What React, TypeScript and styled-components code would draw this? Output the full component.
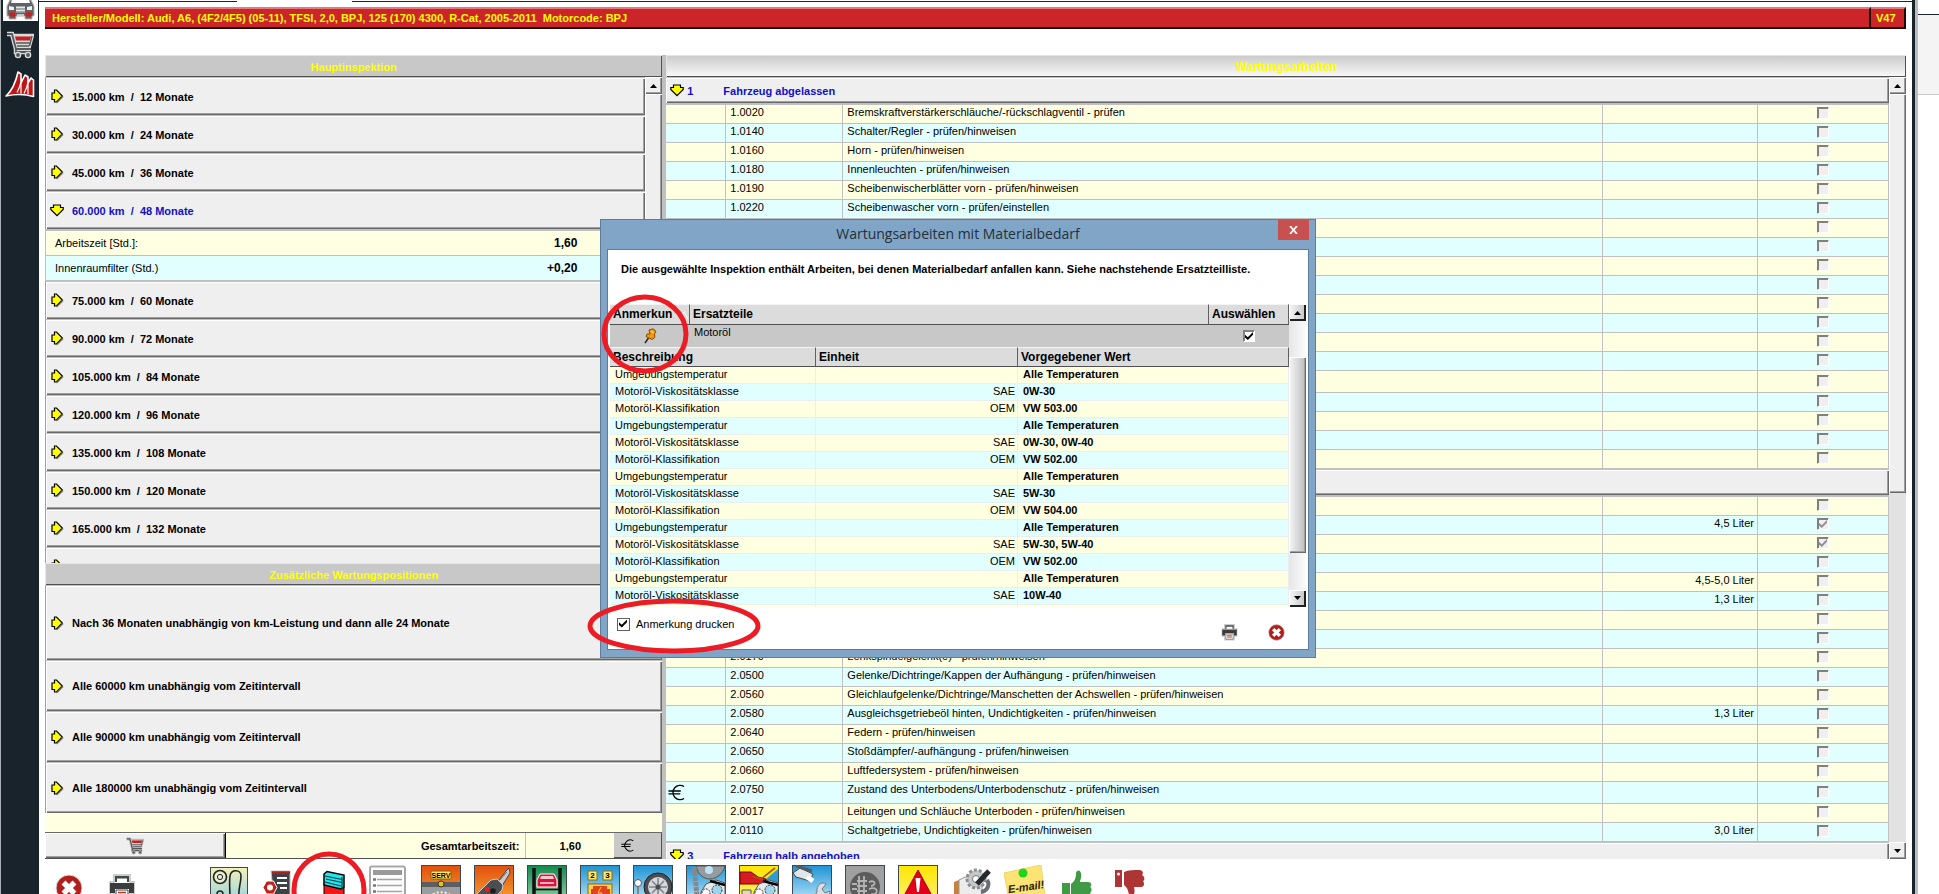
import React from "react";
import styled, { createGlobalStyle, css } from "styled-components";

const CREAM = "#ffffe1";
const AQUA = "#e1ffff";
const FACE = "#efefef";
const EDGE = "#c0c0c0";
const DARK = "#696969";

const GlobalStyle = createGlobalStyle`
  *, *::before, *::after { box-sizing: border-box; }
  body {
    margin: 0;
    background: #fff;
    color: #000;
    font: 11px/14px "Liberation Sans", Arial, sans-serif;
    overflow: hidden;
  }
  button { font: inherit; color: inherit; border: 0; padding: 0; background: none; border-radius: 0; }
  table { border-collapse: separate; border-spacing: 0; table-layout: fixed; width: 100%; }
  td, th { padding: 0; text-align: left; }
`;

const raised = css`
  background: ${FACE};
  box-shadow: inset 1px 1px #fff, inset -1px -1px ${DARK}, inset -2px -2px #a0a0a0;
`;

/* ---------- page frame ---------- */

const Page = styled.div`
  display: flex;
  height: 100vh;
  overflow: hidden;
`;

const Sidebar = styled.nav`
  flex: none;
  width: 39px;
  display: flex;
  flex-direction: column;
  align-items: center;
  background: #18232b;
  border-left: 1px solid #a9b0b4;
`;

const SideButton = styled.button<{ $active?: boolean; $height: number }>`
  width: 35px;
  height: ${(p) => p.$height}px;
  display: flex;
  align-items: center;
  justify-content: center;
  background: ${(p) => (p.$active ? "#fff" : "transparent")};
`;

const Workspace = styled.main`
  flex: 1;
  min-width: 0;
  display: flex;
  flex-direction: column;
  border-right: 3px solid #18232b;
`;

const TabEdge = styled.div`
  flex: none;
  display: flex;
  justify-content: space-between;
  height: 2px;
  margin-bottom: 5px;
`;

const TabLine = styled.div<{ $grow?: boolean }>`
  width: ${(p) => (p.$grow ? "auto" : "198px")};
  flex: ${(p) => (p.$grow ? 1 : "none")};
  margin-left: ${(p) => (p.$grow ? 115 : 0)}px;
  border-bottom: 1px solid #18232b;
`;

const Body = styled.div`
  flex: 1;
  min-height: 0;
  display: flex;
  flex-direction: column;
  padding: 0 6px;
`;

const VehicleBar = styled.header`
  flex: none;
  display: flex;
  height: 22px;
  margin-bottom: 26px;
  color: #ffff00;
  font-weight: bold;
  line-height: 19px;
`;

const BarCell = styled.div<{ $grow?: boolean }>`
  flex: ${(p) => (p.$grow ? 1 : "none")};
  width: ${(p) => (p.$grow ? "auto" : "35px")};
  padding-left: ${(p) => (p.$grow ? 7 : 5)}px;
  white-space: pre;
  overflow: hidden;
  background: #cc2529;
  border-top: 2px solid #e8787a;
  border-right: 2px solid #200505;
  border-bottom: 2px solid #200505;
`;

const Columns = styled.div`
  flex: 1;
  min-height: 0;
  display: grid;
  grid-template-columns: minmax(0, 617fr) minmax(0, 1239fr);
  grid-template-rows: minmax(0, 1fr);
  column-gap: 4px;
  background: ${EDGE};
`;

const Panel = styled.section`
  display: flex;
  flex-direction: column;
  min-height: 0;
  background: #fff;
`;

const PanelTitle = styled.h2<{ $large?: boolean; $gradient?: boolean }>`
  flex: none;
  height: 22px;
  margin: 0;
  padding-top: 1px;
  text-align: center;
  font-size: ${(p) => (p.$large ? 12 : 11)}px;
  line-height: 22px;
  color: #ffff00;
  background: ${(p) => (p.$gradient ? "linear-gradient(#c9c9c9, #fafafa)" : "#c8c8c8")};
  box-shadow: inset 1px 1px #e4e4e4, inset -1px -1px #505050;
`;

const ListArea = styled.div`
  flex: 1;
  min-height: 0;
  display: flex;
`;

const ListBody = styled.div`
  flex: 1;
  min-width: 0;
  overflow: hidden;
`;

/* ---------- scroll bars ---------- */

const ScrollTrack = styled.div<{ $modal?: boolean }>`
  flex: none;
  width: 17px;
  display: flex;
  flex-direction: column;
  background: ${(p) => (p.$modal ? "linear-gradient(90deg, #e6e6e6, #fbfbfb)" : "#e2e2e2")};
`;

const ScrollButton = styled.button<{ $modal?: boolean }>`
  flex: none;
  height: 17px;
  display: flex;
  align-items: center;
  justify-content: center;
  ${raised}
  ${(p) =>
    p.$modal &&
    css`
      background: linear-gradient(90deg, #f8f8f8, #c4c4c4);
      box-shadow: inset 1px 1px #fff, inset -2px -2px #202020;
    `}
`;

const ScrollThumb = styled.div<{ $share: number; $modal?: boolean }>`
  flex: ${(p) => p.$share} 1 0;
  ${raised}
  ${(p) =>
    p.$modal &&
    css`
      background: linear-gradient(90deg, #f6f6f6, #bcbcbc);
    `}
`;

const ScrollGap = styled.div<{ $share: number }>`
  flex: ${(p) => p.$share} 1 0;
`;

function ScrollBar(props: { before?: number; thumb: number; after: number; modal?: boolean }) {
  const { before = 0, thumb, after, modal } = props;
  return (
    <ScrollTrack $modal={modal}>
      <ScrollButton $modal={modal} aria-label="Nach oben">
        <svg width="7" height="4"><path d="M0 4L3.5 0L7 4Z" /></svg>
      </ScrollButton>
      {before > 0 && <ScrollGap $share={before} />}
      <ScrollThumb $share={thumb} $modal={modal} />
      <ScrollGap $share={after} />
      <ScrollButton $modal={modal} aria-label="Nach unten">
        <svg width="7" height="4"><path d="M0 0L3.5 4L7 0Z" /></svg>
      </ScrollButton>
    </ScrollTrack>
  );
}

/* ---------- inspection lists ---------- */

const IntervalButton = styled.button<{ $open?: boolean; $height: number }>`
  width: 100%;
  height: ${(p) => p.$height}px;
  display: flex;
  align-items: center;
  gap: 8px;
  padding-left: 4px;
  border-top: 1px solid ${EDGE};
  border-left: 1px solid #a0a0a0;
  font-weight: bold;
  white-space: pre;
  color: ${(p) => (p.$open ? "#1010c8" : "#000")};
  ${raised}
`;

const ArrowSlot = styled.span`
  width: 14px;
  display: flex;
  justify-content: center;
`;

const TimeRows = styled.dl`
  margin: 0;
  border-top: 2px solid ${EDGE};
  border-left: 1px solid ${EDGE};
`;

const TimeRow = styled.div<{ $tint: string }>`
  height: 25px;
  display: flex;
  justify-content: space-between;
  align-items: center;
  padding: 0 68px 0 9px;
  background: ${(p) => p.$tint};
  border-bottom: 1px solid ${EDGE};
`;

const TimeValue = styled.dd`
  margin: 0;
  font-size: 12px;
  font-weight: bold;
`;

const Spacer = styled.div`
  flex: none;
  height: 20px;
  background: ${CREAM};
  border-bottom: 1px solid ${DARK};
`;

const TotalRow = styled.div`
  flex: none;
  display: flex;
  height: 26px;
  background: ${CREAM};
  font-weight: bold;
  line-height: 26px;
  border-bottom: 1px solid #505050;
`;

const CartButton = styled.button`
  width: 181px;
  display: flex;
  align-items: center;
  justify-content: center;
  border-right: 1px solid #000;
  ${raised}
`;

const TotalLabel = styled.div`
  flex: 1;
  text-align: right;
  padding-right: 6px;
  border-right: 1px solid ${EDGE};
`;

const TotalValue = styled.div`
  width: 88px;
  text-align: center;
`;

const EuroButton = styled.button`
  width: 48px;
  padding-left: 7px;
  display: flex;
  align-items: center;
  background: #c8c8c8;
  box-shadow: inset -1px -1px #505050;
`;

/* ---------- work table ---------- */

const WorkRow = styled.tr<{ $tint: string; $tall?: boolean }>`
  height: ${(p) => (p.$tall ? 22 : 19)}px;
  background: ${(p) => p.$tint};
`;

const WorkCell = styled.td<{ $align?: "right" | "center" }>`
  height: inherit;
  padding: 0 3px 0 ${(p) => (p.$align ? 3 : 4)}px;
  line-height: 14px;
  vertical-align: top;
  white-space: nowrap;
  text-align: ${(p) => p.$align ?? "left"};
  border-right: 1px solid ${EDGE};
  border-bottom: 1px solid ${EDGE};
`;

const MarkCell = styled(WorkCell)`
  padding: 0 3px 0 2px;
  line-height: 0;
  vertical-align: middle;
`;

const TickCell = styled(WorkCell)`
  padding: 0 0 2px;
  line-height: 0;
  vertical-align: middle;
`;

const SectionButton = styled.button`
  width: 100%;
  height: 28px;
  display: flex;
  align-items: center;
  padding-left: 4px;
  font-weight: bold;
  color: #1010c8;
  border-top: 1px solid ${EDGE};
  border-bottom: 2px solid ${EDGE};
  ${raised}
`;

const SectionNumber = styled.span`
  width: 36px;
  margin-left: 3px;
  text-align: left;
`;

const Tick = styled.input<{ $tone: "grey" | "black" }>`
  appearance: none;
  flex: none;
  width: 12px;
  height: 12px;
  margin: 0;
  background: ${(p) => (p.$tone === "grey" ? "#efefef" : "#fff")};
  border: 1px solid;
  border-color: #808080 #fff #fff #808080;
  box-shadow: inset 1px 1px #808080;
  &:checked::after {
    content: "";
    display: block;
    width: 8px;
    height: 8px;
    margin: 1px;
    background: ${(p) => (p.$tone === "grey" ? "#909090" : "#000")};
    clip-path: polygon(0 35%, 35% 65%, 100% 0, 100% 35%, 35% 100%, 0 70%);
  }
`;

/* ---------- dialog ---------- */

const Dialog = styled.div`
  position: fixed;
  left: 600px;
  top: 219px;
  width: 716px;
  padding: 0 6px 7px;
  background: #81a5c6;
  border: 1px solid #5d7c9a;
`;

const DialogHead = styled.div`
  display: flex;
  height: 29px;
`;

const DialogTitle = styled.h1`
  flex: 1;
  margin: 0;
  padding-left: 31px;
  text-align: center;
  font: 14px/28px "Open Sans", "Noto Sans", sans-serif;
  color: #23303c;
`;

const DialogClose = styled.button`
  width: 31px;
  height: 20px;
  display: flex;
  align-items: center;
  justify-content: center;
  background: #c75050;
`;

const DialogBody = styled.div`
  background: #fff;
  border: 1px solid #5d7c9a;
  padding: 12px 2px 0;
  height: 401px;
`;

const Message = styled.p`
  margin: 0 0 28px;
  padding-left: 11px;
  font-weight: bold;
  white-space: nowrap;
`;

const PartsArea = styled.div`
  display: flex;
  height: 303px;
  overflow: hidden;
`;

const PartsTables = styled.div`
  flex: 1;
  min-width: 0;
  overflow: hidden;
`;

const HeadCell = styled.th<{ $short?: boolean }>`
  height: ${(p) => (p.$short ? 20 : 21)}px;
  padding: 0 0 0 3px;
  font-size: 12px;
  line-height: ${(p) => (p.$short ? 18 : 19)}px;
  white-space: nowrap;
  background: #dcdcdc;
  border-top: 1px solid #f4f4f4;
  border-right: 1px solid #606060;
  border-bottom: 1px solid #505050;
`;

const SortMark = styled.span`
  margin-left: 8px;
  font-weight: normal;
  font-size: 11px;
  color: #fff;
`;

const PartCell = styled.td<{ $center?: boolean }>`
  height: 22px;
  padding-left: ${(p) => (p.$center ? 0 : 4)}px;
  background: #c8c8c8;
  vertical-align: ${(p) => (p.$center ? "middle" : "top")};
  text-align: ${(p) => (p.$center ? "center" : "left")};
  line-height: ${(p) => (p.$center ? 0 : "14px")};
`;

const SpecCell = styled.td<{ $tint: string; $right?: boolean; $bold?: boolean }>`
  height: 17px;
  padding: 0 2px 2px 5px;
  line-height: 14px;
  white-space: nowrap;
  background: ${(p) => p.$tint};
  text-align: ${(p) => (p.$right ? "right" : "left")};
  font-weight: ${(p) => (p.$bold ? "bold" : "normal")};
  border-right: 1px solid #e9eef0;
  border-bottom: 1px solid #e9eef0;
`;

const DialogFoot = styled.div`
  display: flex;
  align-items: flex-start;
  padding: 10px 21px 0 7px;
`;

const PrintOption = styled.label`
  flex: 1;
  display: flex;
  align-items: center;
  gap: 6px;
`;

const PrintTick = styled(Tick)`
  width: 13px;
  height: 13px;
  border-color: #606060;
  box-shadow: none;
`;

const FootButton = styled.button`
  width: 17px;
  height: 17px;
  margin: 7px 0 0 30px;
  line-height: 0;
`;

/* red pen circles drawn on top of the screen */
const PenRing = styled.svg<{ $x: number; $y: number }>`
  position: absolute;
  left: ${(p) => p.$x}px;
  top: ${(p) => p.$y}px;
  pointer-events: none;
  fill: none;
  stroke: #ed1c24;
  stroke-width: 5px;
`;

/* ---------- tool bar ---------- */

const ToolBar = styled.div`
  flex: none;
  display: flex;
  align-items: flex-start;
  height: 35px;
  padding: 6px 0 0 4px;
`;

const Tool = styled.button`
  position: relative;
  flex: none;
  width: 40px;
  height: 40px;
  margin-right: 13px;
  line-height: 0;
`;

const ToolPad = styled.span`
  display: flex;
  justify-content: center;
  padding-top: 6px;
`;

const ToolGap = styled.span<{ $width: number }>`
  flex: none;
  width: ${(p) => p.$width}px;
`;

const RightStrip = styled.aside`
  flex: none;
  width: 24px;
  border-left: 3px solid #bdbdbd;
  background: #fff;
`;

const StripBox = styled.div`
  height: 81px;
  margin-top: 14px;
  background: #f4f4f4;
  border-top: 1px solid #18232b;
  border-bottom: 1px solid #c8c8c8;
`;

/* ---------- drawings ---------- */

const ArrowRight = () => (
  <svg width="13" height="15" viewBox="0 0 13 15">
    <path d="M6 14.2L12.4 7.8" stroke="#777" />
    <path d="M3.5 4V1H5.5L11.3 7L5.5 13H3.5V10.500H1V4Z" fill="#ffff00" stroke="#000" strokeWidth="1.200" />
  </svg>
);

const ArrowDown = () => (
  <svg width="14" height="13" viewBox="0 0 14 13">
    <path d="M3.500 1H10.500V3.500H13.200V5.500L7 11.700L.8 5.500V3.500H3.500Z" fill="#ffff00" stroke="#000" strokeWidth="1.200" />
  </svg>
);

const Euro = ({ size }: { size: number }) => (
  <svg width={size} height={size} viewBox="0 0 18 18" fill="none" stroke="#000" strokeWidth="1.4">
    <path d="M17 2.6A7.6 7.6 0 1 0 17 15.4M.5 7.4H13.5M.5 10.4H13" />
  </svg>
);

const Cart = ({ size, rim }: { size: number; rim: string }) => (
  <svg width={size} height={size} viewBox="0 0 28 26" fill="none">
    <path d="M1 2H6L10 17H25M10 17V20H25" stroke={rim} strokeWidth="4.500" />
    <path d="M7 3H27L24 14H10Z" fill="#d8d8d8" stroke={rim} strokeWidth="2.500" />
    <path d="M1 2H6L10 17H25M10 17V20H25" stroke="#56585a" strokeWidth="1.800" />
    <path d="M9 4.500H25L24 8.500H10Z" fill="#c81e1e" />
    <path d="M10 11H23.500M11 14H23M26 4L23.500 14" stroke="#56585a" strokeWidth="1.400" />
    <circle cx="12" cy="23" r="2.600" fill="#56585a" stroke={rim} strokeWidth="1.400" />
    <circle cx="22" cy="23" r="2.600" fill="#56585a" stroke={rim} strokeWidth="1.400" />
  </svg>
);

const Car = () => (
  <svg width="31" height="21" viewBox="0 0 31 21">
    <path d="M5 0H26L29 6V16H27V19H20V16H11V19H4V16H2V6Z" fill="#606365" stroke="#b4b4b4" />
    <path d="M7 0H24L25 3H6Z" fill="#fff" />
    <path d="M11 6H20V13H11Z" fill="#8f9294" />
    <path d="M11 7.500H20M11 10.500H20" stroke="#e8e8e8" strokeWidth="1.600" />
    <path d="M4 6L9 7V10H4ZM27 6L22 7V10H27Z" fill="#f0f0f0" />
    <path d="M4.500 12.500H10V16.500H4.500ZM21 12.500H26.500V16.500H21Z" fill="#d41c1c" />
    <path d="M12 15H19" stroke="#ddd" strokeWidth="1.600" />
  </svg>
);

const Peaks = () => (
  <svg width="30" height="29" viewBox="0 0 30 29">
    <path d="M1 26C8 20 11 11 13 2L16 4V13L20 5L23 7V13L26 8L28.500 10V26.500C20 24 10 24 1 26Z" fill="#c21414" stroke="#fff" strokeWidth="1.600" strokeLinejoin="round" />
    <path d="M12 22.500C14 19 15 16 16 12V23.500M19 23.500C21 20 22 17 23 12.500V24" fill="none" stroke="#fff" strokeWidth="1.200" />
  </svg>
);

const RoundX = ({ size }: { size: number }) => (
  <svg width={size} height={size} viewBox="0 0 28 28">
    <circle cx="14" cy="14" r="13" fill="#b21f1a" stroke="#ddd" />
    <path d="M8.500 8.500L19.500 19.500M19.500 8.500L8.500 19.500" stroke="#fff" strokeWidth="5.500" />
  </svg>
);

const Printer = ({ size }: { size: number }) => (
  <svg width={size} height={size} viewBox="0 0 28 28">
    <path d="M6 1H22V8H26V20H22V26H6V20H2V8H6Z" fill="#fff" stroke="#ccc" strokeWidth="2" />
    <path d="M7 2H21V8H7Z" fill="#454749" />
    <path d="M9 4.500H19V8H9Z" fill="#fff" />
    <path d="M2 9H26V19H21V15H7V19H2Z" fill="#3a3c3e" />
    <path d="M8 16H20V25H8Z" fill="#fff" stroke="#454749" />
    <path d="M10 18.500H18M10 21.500H18" stroke="#c8321e" strokeWidth="1.600" />
  </svg>
);

const Pin = () => (
  <svg width="13" height="16" viewBox="0 0 13 16">
    <path d="M4.500 10L1 15" stroke="#222" strokeWidth="1.400" />
    <path d="M5 2L9 .8L12 3.200L10.500 6L10.800 9.500L8 11.500L2 8.500L3 6L6 6Z" fill="#f0960f" stroke="#8a4a00" />
    <path d="M7 3L9.500 5" stroke="#ffe08a" strokeWidth="1.400" />
  </svg>
);

const Tile = ({ fill, children }: { fill: string; children?: React.ReactNode }) => (
  <svg width="40" height="40" viewBox="0 0 40 40">
    <rect x=".5" y=".5" width="39" height="39" fill={fill} stroke="#3a4a50" />
    {children}
  </svg>
);

const TileFills = () => (
  <defs>
    <linearGradient id="tile-blue" x2="0" y2="1"><stop stopColor="#1d93d6" /><stop offset="1" stopColor="#c9ecfa" /></linearGradient>
    <linearGradient id="tile-orange" x2="0" y2="1"><stop stopColor="#e2500c" /><stop offset="1" stopColor="#f8a83a" /></linearGradient>
    <linearGradient id="tile-green" x2="0" y2="1"><stop stopColor="#12894c" /><stop offset="1" stopColor="#9fd8b0" /></linearGradient>
    <linearGradient id="tile-mint" x2="0" y2="1"><stop stopColor="#f3f3b4" /><stop offset="1" stopColor="#8fd0e8" /></linearGradient>
    <linearGradient id="tile-yellow" x2="0" y2="1"><stop stopColor="#ffe600" /><stop offset="1" stopColor="#fff27a" /></linearGradient>
  </defs>
);

const Engine = () => (
  <g>
    <path d="M15 40V27L20 19L30 15L39 18V40Z" fill="#e4e9ec" stroke="#555" />
    <circle cx="20" cy="28" r="4" fill="#fff" stroke="#333" strokeDasharray="2 1" />
    <circle cx="31" cy="25" r="5" fill="#9fd4ec" stroke="#333" strokeDasharray="2 1" />
    <path d="M24 16L39 20" stroke="#000" strokeWidth="2.500" />
  </g>
);

const BeltIcon = () => (
  <svg width="38" height="40" viewBox="0 0 38 40">
    <TileFills />
    <rect x=".5" y="2.500" width="37" height="37" fill="url(#tile-mint)" stroke="#40484a" />
    <circle cx="10" cy="12" r="6.500" fill="#e8ecd0" stroke="#222" strokeWidth="1.600" />
    <circle cx="10" cy="12" r="2.600" fill="none" stroke="#222" />
    <path d="M20 32C20 24 19 18 20 11C21 4 31 4 31 11C31 18 28 24 29 32" fill="none" stroke="#222" strokeWidth="1.600" />
    <circle cx="10" cy="29" r="3" fill="none" stroke="#222" strokeWidth="1.600" />
  </svg>
);

const NutSheet = () => (
  <svg width="40" height="40" viewBox="0 0 40 40">
    <path d="M9 6H28V34H12Z" fill="#3f4244" stroke="#c4c4c4" />
    <path d="M10 6.500H28V9H10Z" fill="#b21f1a" />
    <path d="M15 13H25M15 18H25M18 23H25" stroke="#fff" strokeWidth="2" />
    <path d="M4.500 16H11.500L15 22.500L11.500 29H4.500L1 22.500Z" fill="#c2211c" stroke="#fff" />
    <circle cx="8" cy="22.500" r="3" fill="#fff" />
  </svg>
);

const Book = () => (
  <svg width="40" height="40" viewBox="0 0 40 40">
    <path d="M9 18L29 22V40H9Z" fill="#f01818" stroke="#000" />
    <path d="M9 9L12 6.500L29 10V22L26 24L9 20Z" fill="#22e6ee" stroke="#000" strokeWidth="1.500" />
    <path d="M10 11L27 14.500M11 14L27 17.500M10 17L26 21M27 24V12" fill="none" stroke="#063c40" strokeWidth="1.200" />
  </svg>
);

const Sheet = () => (
  <svg width="38" height="40" viewBox="0 0 38 40">
    <rect x="1" y="1.500" width="35" height="44" rx="2" fill="#fdfdfd" stroke="#a8a8a8" strokeWidth="2" />
    <rect x="4" y="5" width="29" height="5" fill="#9a9a9a" />
    <path d="M8 14.500H33M8 20.500H33M8 26.500H33" stroke="#a4a4a4" strokeWidth="1.600" />
    <path d="M4 14.500H7M4 20.500H7M4 26.500H7" stroke="#777" strokeWidth="2.500" />
  </svg>
);

const ServIcon = () => (
  <Tile fill="url(#tile-orange)">
    <rect x="10" y="6" width="20" height="8" rx="1" fill="#ffe667" stroke="#8a5a00" />
    <text x="20" y="13" fontSize="7" fontWeight="bold" textAnchor="middle" fontFamily="Liberation Sans, sans-serif">SERV</text>
    <path d="M1 17H39V40H1Z" fill="#9b9da0" />
    <path d="M1 17H39V22H1Z" fill="#5c5e60" />
    <circle cx="20" cy="19" r="3" fill="#e2c412" stroke="#333" />
    <path d="M9 32A12 8 0 0 1 31 32" fill="none" stroke="#eee" strokeWidth="2" strokeDasharray="2 2" />
  </Tile>
);

const KeyIcon = () => (
  <Tile fill="url(#tile-orange)">
    <path d="M23 18L32 6L35 3L36 8L28 21Z" fill="#c9ccce" stroke="#444" />
    <path d="M26 15L33 7" stroke="#777" />
    <path d="M3 29L17 15L23 14L29 20L28 25L14 40H4Z" fill="#4b4e50" stroke="#c9ccce" />
    <circle cx="13" cy="24" r="2.500" fill="#d22" />
    <circle cx="19" cy="26" r="2.800" fill="#1c1e20" />
  </Tile>
);

const LiftIcon = () => (
  <Tile fill="url(#tile-green)">
    <path d="M7 3V40M33 3V40" stroke="#111" strokeWidth="3.500" />
    <path d="M7 24.500H33" stroke="#111" strokeWidth="1.600" />
    <path d="M13 9H27L30 15V22H10V15Z" fill="#d8143c" stroke="#fff" />
    <path d="M14 11H26L27 14H13Z" fill="#ffc4cc" />
    <path d="M13 18H27" stroke="#ffb0c0" strokeWidth="2" />
  </Tile>
);

const OrderIcon = () => (
  <Tile fill="url(#tile-blue)">
    <rect x="8" y="6" width="9" height="9" fill="#ffe667" stroke="#8a6a10" />
    <rect x="23" y="6" width="9" height="9" fill="#ffe667" stroke="#8a6a10" />
    <text x="12.500" y="13" fontSize="8" fontWeight="bold" textAnchor="middle" fontFamily="Liberation Sans, sans-serif">2</text>
    <text x="27.500" y="13" fontSize="8" fontWeight="bold" textAnchor="middle" fontFamily="Liberation Sans, sans-serif">3</text>
    <rect x="8" y="19" width="24" height="21" fill="#ffd24a" stroke="#8a6a10" />
    <path d="M13 21H27V24H30V34H11V24H13Z" fill="#e2421c" />
    <path d="M21 22L18 28L22 28L19 34" fill="none" stroke="#ffd24a" />
  </Tile>
);

const WheelIcon = () => (
  <Tile fill="url(#tile-blue)">
    <circle cx="25" cy="22" r="14" fill="#4b4e50" stroke="#222" />
    <circle cx="25" cy="22" r="10" fill="#d6dade" />
    <path d="M25 13V31M16 22H34M19 16L31 28M31 16L19 28" stroke="#7f858a" strokeWidth="1.600" />
    <circle cx="25" cy="22" r="2.500" fill="#4b4e50" />
    <circle cx="5" cy="18" r="3.500" fill="#fff" stroke="#555" />
    <path d="M5 22V40" stroke="#777" strokeWidth="1.600" />
  </Tile>
);

const ChainIcon = () => (
  <Tile fill="url(#tile-blue)">
    <path d="M10 1H39C37 9 30 14 24 14C17 14 12 9 10 1Z" fill="#969b9f" stroke="#555" />
    <circle cx="23" cy="5" r="4" fill="#bfe4f4" />
    <path d="M8 2L11 30" stroke="#83898d" strokeWidth="5" strokeDasharray="4 1" />
    <Engine />
  </Tile>
);

const BonnetIcon = () => (
  <Tile fill="url(#tile-yellow)">
    <path d="M39 4V39H22V18Z" fill="#2d9bd6" />
    <path d="M1 7H12L19 12L27 14L26 19H1Z" fill="#d61c22" stroke="#700" />
    <path d="M14 11L22 14L36 3" fill="none" stroke="#b05010" strokeWidth="1.600" />
    <path d="M3 25H12V38H3Z" fill="#e6dca0" stroke="#555" />
    <Engine />
  </Tile>
);

const ToolsIcon = () => (
  <Tile fill="url(#tile-blue)">
    <path d="M1 8L8 3L21 9L18 16L4 12Z" fill="#e1e6ea" stroke="#444" />
    <path d="M4 1L20 6" stroke="#555a5e" strokeWidth="3" />
    <path d="M15 12L21 16" stroke="#fff" strokeWidth="5" />
    <path d="M17 40L25 27C24 20 30 16 34 19L30 24L33 28L38 26C38 32 34 34 31 32L26 40Z" fill="#d9dfe3" stroke="#777" />
  </Tile>
);

const ValveIcon = () => (
  <Tile fill="#a0a0a0">
    <circle cx="20" cy="22" r="15" fill="#5c5c5c" />
    <path d="M14 11V36M19 11V36M12 16H22M12 21H22M12 26H22" stroke="#b4b4b4" strokeWidth="1.800" />
    <path d="M7 19H12M7 24H12M24 17C31 14 31 21 26 21M24 24C34 20 34 31 26 29" fill="none" stroke="#b4b4b4" strokeWidth="1.800" />
  </Tile>
);

const WarningIcon = () => (
  <Tile fill="url(#tile-yellow)">
    <path d="M20 5L38 38H2Z" fill="#e2001a" stroke="#b00014" />
    <path d="M17.500 13H22.500L21 27H19Z" fill="#fff" />
    <circle cx="20" cy="31" r="2" fill="#fff" />
  </Tile>
);

const ManualIcon = () => (
  <svg width="42" height="40" viewBox="0 0 42 40">
    <path d="M3 17L8 15V40H3Z" fill="#c9803c" />
    <path d="M8 15L14 12L22 16L31 22V40H8Z" fill="#ececec" stroke="#999" />
    <circle cx="25" cy="14" r="9" fill="#c4c8ca" stroke="#8a8e90" strokeWidth="3" strokeDasharray="3 2" />
    <circle cx="25" cy="14" r="3.500" fill="#fff" stroke="#777" />
    <path d="M26 19L38 6" stroke="#26292b" strokeWidth="5" />
    <path d="M30 27C37 26 39 19 36 15" fill="none" stroke="#6a6e70" strokeWidth="4" />
  </svg>
);

const MailNote = () => (
  <svg width="42" height="40" viewBox="0 0 42 40">
    <path d="M0 8L37 0L42 40H6Z" fill="#fbe374" stroke="#f0d560" />
    <circle cx="19" cy="8" r="4.500" fill="#1ed61e" />
    <text x="4" y="26" fontSize="11" fontWeight="bold" fontStyle="italic" transform="rotate(-8 20 24)" fontFamily="Liberation Sans, sans-serif" fill="#2a2208">E-mail!</text>
  </svg>
);

const Thumb = ({ down }: { down?: boolean }) =>
  down ? (
    <svg width="32" height="40" viewBox="0 0 32 40" fill="#ad3535">
      <path d="M1 5H8V22H1ZM10 7C14 5 20 5 26 5C30 6 29 9 28 10C31 12 31 15 29 16C31 19 30 22 27 22H20C21 26 21 31 17 31C14 31 15 25 12 22L10 20Z" />
      <circle cx="4.500" cy="9" r="1.500" fill="#fff" />
    </svg>
  ) : (
    <svg width="32" height="40" viewBox="0 0 32 40" fill="#3f9a45">
      <path d="M1 18H9V35H1ZM10 19C14 16 15 13 15 8C16 4 20 5 20 9C21 12 19 15 19 17H27C31 17 31 21 29 22C32 24 30 27 29 28C31 30 29 32 28 33H10Z" />
    </svg>
  );

/* ---------- data ---------- */

const before = [
  ["15.000", "12"],
  ["30.000", "24"],
  ["45.000", "36"],
];
const after = [
  ["75.000", "60"],
  ["90.000", "72"],
  ["105.000", "84"],
  ["120.000", "96"],
  ["135.000", "108"],
  ["150.000", "120"],
  ["165.000", "132"],
];

const extras: { text: string; height: number }[] = [
  { text: "Nach 36 Monaten unabhängig von km-Leistung und dann alle 24 Monate", height: 75 },
  { text: "Alle 60000 km unabhängig vom Zeitintervall", height: 51 },
  { text: "Alle 90000 km unabhängig vom Zeitintervall", height: 51 },
  { text: "Alle 180000 km unabhängig vom Zeitintervall", height: 51 },
];

type Work = { code?: string; text?: string; amount?: string; done?: boolean; euro?: boolean };

const lowered: Work[] = [
  { code: "1.0020", text: "Bremskraftverstärkerschläuche/-rückschlagventil - prüfen" },
  { code: "1.0140", text: "Schalter/Regler - prüfen/hinweisen" },
  { code: "1.0160", text: "Horn - prüfen/hinweisen" },
  { code: "1.0180", text: "Innenleuchten - prüfen/hinweisen" },
  { code: "1.0190", text: "Scheibenwischerblätter vorn - prüfen/hinweisen" },
  { code: "1.0220", text: "Scheibenwascher vorn - prüfen/einstellen" },
  {}, {}, {}, {}, {}, {}, {}, {},
  { euro: true },
  {}, {}, {}, {},
];

const lifted: Work[] = [
  {},
  { amount: "4,5 Liter", done: true },
  { done: true },
  {},
  { amount: "4,5-5,0 Liter" },
  { amount: "1,3 Liter" },
  {}, {},
  { code: "2.0170", text: "Lenkspindelgelenk(e) - prüfen/hinweisen" },
  { code: "2.0500", text: "Gelenke/Dichtringe/Kappen der Aufhängung - prüfen/hinweisen" },
  { code: "2.0560", text: "Gleichlaufgelenke/Dichtringe/Manschetten der Achswellen - prüfen/hinweisen" },
  { code: "2.0580", text: "Ausgleichsgetriebeöl hinten, Undichtigkeiten - prüfen/hinweisen", amount: "1,3 Liter" },
  { code: "2.0640", text: "Federn - prüfen/hinweisen" },
  { code: "2.0650", text: "Stoßdämpfer/-aufhängung - prüfen/hinweisen" },
  { code: "2.0660", text: "Luftfedersystem - prüfen/hinweisen" },
  { code: "2.0750", text: "Zustand des Unterbodens/Unterbodenschutz - prüfen/hinweisen", euro: true },
  { code: "2.0017", text: "Leitungen und Schläuche Unterboden - prüfen/hinweisen" },
  { code: "2.0110", text: "Schaltgetriebe, Undichtigkeiten - prüfen/hinweisen", amount: "3,0 Liter" },
];

const T = "Umgebungstemperatur";
const V = "Motoröl-Viskositätsklasse";
const K = "Motoröl-Klassifikation";
const specs = [
  [T, "", "Alle Temperaturen"],
  [V, "SAE", "0W-30"],
  [K, "OEM", "VW 503.00"],
  [T, "", "Alle Temperaturen"],
  [V, "SAE", "0W-30, 0W-40"],
  [K, "OEM", "VW 502.00"],
  [T, "", "Alle Temperaturen"],
  [V, "SAE", "5W-30"],
  [K, "OEM", "VW 504.00"],
  [T, "", "Alle Temperaturen"],
  [V, "SAE", "5W-30, 5W-40"],
  [K, "OEM", "VW 502.00"],
  [T, "", "Alle Temperaturen"],
  [V, "SAE", "10W-40"],
  ["", "", ""],
];

const tools: [string, React.ReactNode][] = [
  ["Serviceanzeige", <ServIcon />],
  ["Schlüssel", <KeyIcon />],
  ["Hebebühne", <LiftIcon />],
  ["Zündfolge", <OrderIcon />],
  ["Räder", <WheelIcon />],
  ["Steuerkette", <ChainIcon />],
  ["Motorraum", <BonnetIcon />],
  ["Reparatur", <ToolsIcon />],
  ["Schaltplan", <ValveIcon />],
  ["Warnhinweise", <WarningIcon />],
  ["Handbuch", <ManualIcon />],
  ["E-Mail", <MailNote />],
  ["Gut", <Thumb />],
  ["Schlecht", <Thumb down />],
];

/* ---------- parts ---------- */

const Interval = ({ km, months, open }: { km: string; months: string; open?: boolean }) => (
  <IntervalButton $height={38} $open={open}>
    <ArrowSlot>{open ? <ArrowDown /> : <ArrowRight />}</ArrowSlot>
    {`${km} km  /  ${months} Monate`}
  </IntervalButton>
);

const Section = ({ no, title }: { no?: string; title?: string }) => (
  <tr>
    <td colSpan={5}>
      <SectionButton aria-label={title ?? "Abschnitt"}>
        <ArrowDown />
        <SectionNumber>{no}</SectionNumber>
        {title}
      </SectionButton>
    </td>
  </tr>
);

const WorkRows = ({ items }: { items: Work[] }) => (
  <>
    {items.map((w, i) => (
      <WorkRow key={i} $tint={i % 2 ? AQUA : CREAM} $tall={w.euro}>
        <MarkCell>{w.euro && <Euro size={17} />}</MarkCell>
        <WorkCell>{w.code}</WorkCell>
        <WorkCell>{w.text}</WorkCell>
        <WorkCell $align="right">{w.amount}</WorkCell>
        <TickCell $align="center">
          <Tick type="checkbox" $tone="grey" disabled defaultChecked={w.done} aria-label={w.text ?? "erledigt"} />
        </TickCell>
      </WorkRow>
    ))}
  </>
);

const MaterialDialog = () => (
  <Dialog role="dialog" aria-labelledby="dialog-title">
    <DialogHead>
      <DialogTitle id="dialog-title">Wartungsarbeiten mit Materialbedarf</DialogTitle>
      <DialogClose aria-label="Schließen">
        <svg width="9" height="8"><path d="M1 0L8 8M8 0L1 8" stroke="#fff" strokeWidth="1.800" /></svg>
      </DialogClose>
    </DialogHead>
    <DialogBody>
      <Message>
        Die ausgewählte Inspektion enthält Arbeiten, bei denen Materialbedarf anfallen kann. Siehe nachstehende Ersatzteilliste.
      </Message>
      <PartsArea>
        <PartsTables>
          <table>
            <colgroup><col width="80" /><col /><col width="80" /></colgroup>
            <thead>
              <tr>
                <HeadCell>Anmerkun<SortMark>△</SortMark></HeadCell>
                <HeadCell>Ersatzteile</HeadCell>
                <HeadCell>Auswählen</HeadCell>
              </tr>
            </thead>
            <tbody>
              <tr>
                <PartCell $center><Pin /></PartCell>
                <PartCell>Motoröl</PartCell>
                <PartCell $center><Tick type="checkbox" $tone="black" defaultChecked aria-label="Motoröl auswählen" /></PartCell>
              </tr>
            </tbody>
          </table>
          <table>
            <colgroup><col width="206" /><col width="202" /><col /></colgroup>
            <thead>
              <tr>
                <HeadCell $short>Beschreibung</HeadCell>
                <HeadCell $short>Einheit</HeadCell>
                <HeadCell $short>Vorgegebener Wert</HeadCell>
              </tr>
            </thead>
            <tbody>
              {specs.map(([name, unit, value], i) => {
                const tint = i % 2 ? AQUA : CREAM;
                return (
                  <tr key={i}>
                    <SpecCell $tint={tint}>{name}</SpecCell>
                    <SpecCell $tint={tint} $right>{unit}</SpecCell>
                    <SpecCell $tint={tint} $bold>{value}</SpecCell>
                  </tr>
                );
              })}
            </tbody>
          </table>
        </PartsTables>
        <ScrollBar modal before={36} thumb={197} after={37} />
      </PartsArea>
      <DialogFoot>
        <PrintOption>
          <PrintTick type="checkbox" $tone="black" defaultChecked />
          Anmerkung drucken
        </PrintOption>
        <FootButton aria-label="Drucken"><Printer size={17} /></FootButton>
        <FootButton aria-label="Abbrechen"><RoundX size={17} /></FootButton>
      </DialogFoot>
    </DialogBody>
    <PenRing $x={0} $y={73} width="88" height="82"><ellipse cx="44" cy="41" rx="41" ry="37" /></PenRing>
    <PenRing $x={-15} $y={377} width="176" height="58"><ellipse cx="88" cy="29" rx="84" ry="25" /></PenRing>
  </Dialog>
);

export default function App() {
  return (
    <Page>
      <GlobalStyle />
      <Sidebar>
        <SideButton $active $height={21} aria-label="Fahrzeug"><Car /></SideButton>
        <SideButton $height={48} aria-label="Warenkorb"><Cart size={28} rim="#d8dadb" /></SideButton>
        <SideButton $height={30} aria-label="Katalog"><Peaks /></SideButton>
      </Sidebar>

      <Workspace>
        <TabEdge><TabLine /><TabLine $grow /></TabEdge>
        <Body>
          <VehicleBar>
            <BarCell $grow>
              {"Hersteller/Modell: Audi, A6, (4F2/4F5) (05-11), TFSI, 2,0, BPJ, 125 (170) 4300, R-Cat, 2005-2011  Motorcode: BPJ"}
            </BarCell>
            <BarCell>V47</BarCell>
          </VehicleBar>

          <Columns>
            <Panel>
              <PanelTitle>Hauptinspektion</PanelTitle>
              <ListArea>
                <ListBody>
                  {before.map(([km, m]) => <Interval key={km} km={km} months={m} />)}
                  <Interval km="60.000" months="48" open />
                  <TimeRows>
                    <TimeRow $tint={CREAM}><dt>Arbeitszeit [Std.]:</dt><TimeValue>1,60</TimeValue></TimeRow>
                    <TimeRow $tint={AQUA}><dt>Innenraumfilter (Std.)</dt><TimeValue>+0,20</TimeValue></TimeRow>
                  </TimeRows>
                  {after.map(([km, m]) => <Interval key={km} km={km} months={m} />)}
                  <IntervalButton $height={38} aria-label="Weitere Inspektionen">
                    <ArrowSlot><ArrowRight /></ArrowSlot>
                  </IntervalButton>
                </ListBody>
                <ScrollBar thumb={3} after={1} />
              </ListArea>
              <PanelTitle>Zusätzliche Wartungspositionen</PanelTitle>
              {extras.map((e) => (
                <IntervalButton key={e.text} $height={e.height}>
                  <ArrowSlot><ArrowRight /></ArrowSlot>
                  {e.text}
                </IntervalButton>
              ))}
              <Spacer />
              <TotalRow>
                <CartButton aria-label="In den Warenkorb"><Cart size={18} rim="#bbb" /></CartButton>
                <TotalLabel>Gesamtarbeitszeit:</TotalLabel>
                <TotalValue>1,60</TotalValue>
                <EuroButton aria-label="Preise"><Euro size={13} /></EuroButton>
              </TotalRow>
            </Panel>

            <Panel>
              <PanelTitle $large $gradient>Wartungsarbeiten</PanelTitle>
              <ListArea>
                <ListBody>
                  <table>
                    <colgroup><col width="60" /><col width="117" /><col /><col width="155" /><col width="131" /></colgroup>
                    <tbody>
                      <Section no="1" title="Fahrzeug abgelassen" />
                      <WorkRows items={lowered} />
                      <Section />
                      <WorkRows items={lifted} />
                      <Section no="3" title="Fahrzeug halb angehoben" />
                    </tbody>
                  </table>
                </ListBody>
                <ScrollBar thumb={399} after={349} />
              </ListArea>
            </Panel>
          </Columns>

          <ToolBar>
            <Tool aria-label="Beenden"><ToolPad><RoundX size={28} /></ToolPad></Tool>
            <Tool aria-label="Drucken"><ToolPad><Printer size={28} /></ToolPad></Tool>
            <ToolGap $width={54} />
            <Tool aria-label="Riementrieb"><BeltIcon /></Tool>
            <Tool aria-label="Stückliste"><NutSheet /></Tool>
            <Tool aria-label="Dokumentation">
              <Book />
              <PenRing $x={-25} $y={-14} width="78" height="86"><ellipse cx="39" cy="39" rx="35" ry="36" /></PenRing>
            </Tool>
            <Tool aria-label="Arbeitsliste"><Sheet /></Tool>
            {tools.map(([name, icon]) => <Tool key={name} aria-label={name}>{icon}</Tool>)}
          </ToolBar>
        </Body>
      </Workspace>

      <RightStrip><StripBox /></RightStrip>
      <MaterialDialog />
    </Page>
  );
}
